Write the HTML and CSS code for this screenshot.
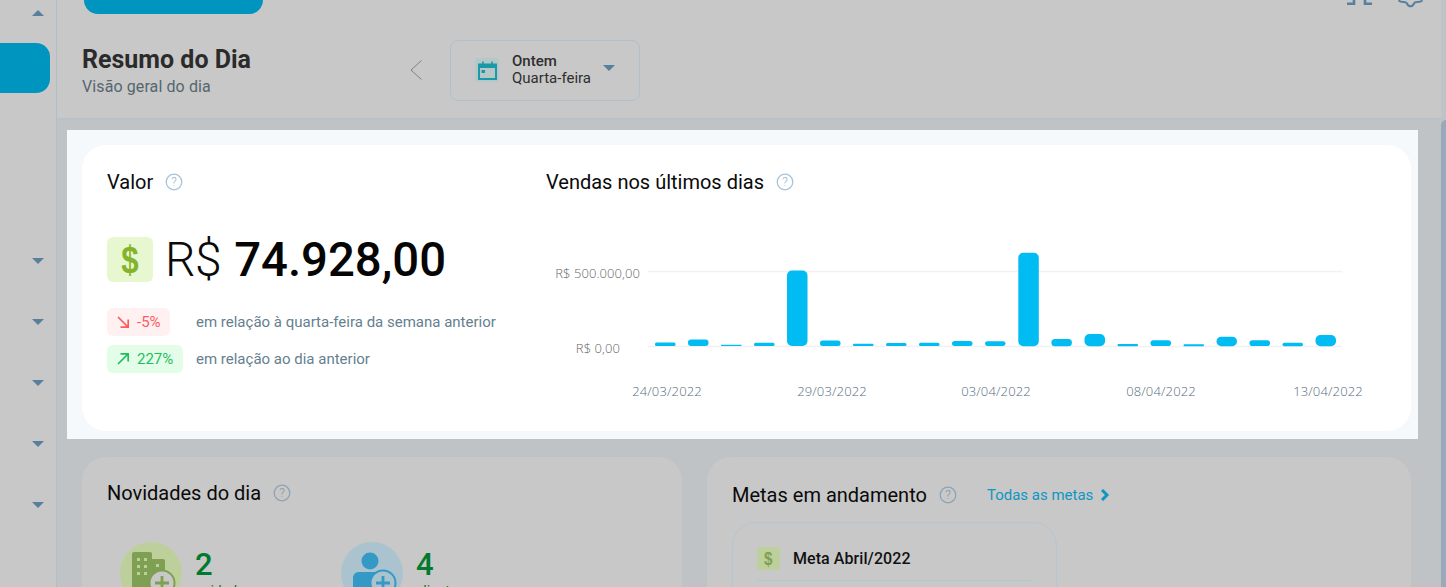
FILE: index.html
```html
<!DOCTYPE html>
<html lang="pt-BR">
<head>
<meta charset="utf-8">
<title>Resumo do Dia</title>
<link rel="stylesheet" href="styles.css">
</head>
<body>
<div class="app">
  <aside class="sidebar">
    <span class="tri tri-up"></span>
    <div class="side-active"></div>
    <div class="side-list">
      <span class="tri"></span>
      <span class="tri"></span>
      <span class="tri"></span>
      <span class="tri"></span>
      <span class="tri"></span>
    </div>
  </aside>
  <main class="main">
    <div class="top-zone">
      <div class="topbar">
        <div class="top-button"></div>
        <div class="top-icons">
          <svg width="25" height="6" viewBox="0 0 25 6"><path d="M0 3.700h7V0M25 3.700h-7V0" fill="none" stroke="#587f9c" stroke-width="2.600"/></svg>
          <svg width="25" height="8" viewBox="0 0 25 8"><path d="M0.500 0.300c1 1.500 3 1.700 5 1.700 2 0 3 0.200 3.500 1.500C9.800 5.300 11 6.300 12.500 6.300s2.700-1 3.500-2.800C16.500 2.200 17.500 2 19.500 2c2 0 4-0.200 5-1.700" fill="none" stroke="#587f9c" stroke-width="2"/></svg>
        </div>
      </div>
      <header class="page-head">
        <div class="titles">
          <h1>Resumo do Dia</h1>
          <p>Visão geral do dia</p>
        </div>
        <svg class="chev" width="14" height="22" viewBox="0 0 14 22"><path d="M12.500 1.500 2 11l10.500 9.500" fill="none" stroke="#76848e" stroke-width="1"/></svg>
        <div class="date-pick">
          <span class="cal-box">
            <svg width="19" height="19" viewBox="0 0 19 19"><path d="M1 3.500h17v14.500H1z" fill="none" stroke="#1a9aa8" stroke-width="2"/><path d="M1 3h17v4H1z" fill="#1a9aa8"/><path d="M5 0.500v3M14 0.500v3" stroke="#1a9aa8" stroke-width="1.600"/><rect x="3.500" y="9" width="3.500" height="3" fill="#1a9aa8"/></svg>
          </span>
          <span class="date-text"><b>Ontem</b><span>Quarta-feira</span></span>
          <span class="tri tri-date"></span>
        </div>
      </header>
    </div>

    <div class="content">
      <section class="spot">
        <div class="card hero">
          <div class="hero-left">
            <h2 class="card-title">Valor <svg class="help" viewBox="0 0 18 18"><circle cx="9" cy="9" r="7.800" fill="none" stroke="#a9c4da" stroke-width="1.300"/><text x="9" y="13" text-anchor="middle" class="help-q">?</text></svg></h2>
            <div class="amount">
              <span class="dollar"><i>$</i></span>
              <span class="rs">R$</span>
              <strong>74.928,00</strong>
            </div>
            <div class="cmp">
              <span class="pill pill-down">
                <svg width="12" height="12" viewBox="0 0 12 12"><path d="M1 1l9.500 9.500M11.200 3.500v7.700H3.500" fill="none" stroke="#fc5b5b" stroke-width="1.700"/></svg>
                -5%
              </span>
              <span class="cmp-text">em relação à quarta-feira da semana anterior</span>
            </div>
            <div class="cmp cmp-2">
              <span class="pill pill-up">
                <svg width="12" height="12" viewBox="0 0 12 12"><path d="M1 11l9.500-9.500M3.500 0.800h7.700v7.700" fill="none" stroke="#1fbf5f" stroke-width="1.700"/></svg>
                227%
              </span>
              <span class="cmp-text">em relação ao dia anterior</span>
            </div>
          </div>
          <div class="hero-right">
            <h2 class="card-title">Vendas nos últimos dias <svg class="help" viewBox="0 0 18 18"><circle cx="9" cy="9" r="7.800" fill="none" stroke="#a9c4da" stroke-width="1.300"/><text x="9" y="13" text-anchor="middle" class="help-q">?</text></svg></h2>
            <svg class="chart" width="840" height="210" viewBox="530 200 840 210">
              <path class="grid" d="M648 271.500H1342M648 346.500H1342"/>
              <text class="y-lbl" x="640" y="278" text-anchor="end">R$ 500.000,00</text>
              <text class="y-lbl" x="620" y="353" text-anchor="end">R$ 0,00</text>
              <g class="bars">
                <rect x="655" y="342.500" width="20.500" height="3.500" rx="1.500"/>
                <rect x="688" y="339.500" width="20.500" height="6.500" rx="3"/>
                <rect x="721" y="344.800" width="20.500" height="1.200" rx="0.500"/>
                <rect x="754" y="342.800" width="20.500" height="3.200" rx="1.500"/>
                <rect x="787" y="270.500" width="20.500" height="75.500" rx="5"/>
                <rect x="820" y="340.500" width="20.500" height="5.500" rx="2.500"/>
                <rect x="853" y="343.800" width="20.500" height="2.200" rx="1"/>
                <rect x="886" y="343" width="20.500" height="3" rx="1.500"/>
                <rect x="919" y="342.800" width="20.500" height="3.200" rx="1.500"/>
                <rect x="952" y="341" width="20.500" height="5" rx="2.500"/>
                <rect x="985" y="341.200" width="20.500" height="4.800" rx="2.400"/>
                <rect x="1018.300" y="252.800" width="20.500" height="93.500" rx="5"/>
                <rect x="1051.400" y="339" width="20.500" height="7.200" rx="3.500"/>
                <rect x="1084.500" y="334" width="20.500" height="12.200" rx="5"/>
                <rect x="1117.500" y="344" width="20.500" height="2.200" rx="1"/>
                <rect x="1150.500" y="340.300" width="20.500" height="5.800" rx="2.800"/>
                <rect x="1183.500" y="344.300" width="20.500" height="1.900" rx="0.900"/>
                <rect x="1216.500" y="336.700" width="20.500" height="9.500" rx="4.700"/>
                <rect x="1249.500" y="340.300" width="20.500" height="5.800" rx="2.800"/>
                <rect x="1282.500" y="342.700" width="20.500" height="3.500" rx="1.700"/>
                <rect x="1315.500" y="335" width="20.500" height="11.200" rx="5"/>
              </g>
              <text class="x-lbl" x="667" y="396" text-anchor="middle">24/03/2022</text>
              <text class="x-lbl" x="832" y="396" text-anchor="middle">29/03/2022</text>
              <text class="x-lbl" x="996" y="396" text-anchor="middle">03/04/2022</text>
              <text class="x-lbl" x="1161" y="396" text-anchor="middle">08/04/2022</text>
              <text class="x-lbl" x="1328" y="396" text-anchor="middle">13/04/2022</text>
            </svg>
          </div>
        </div>
      </section>

      <section class="lower">
        <div class="card news">
          <h2 class="card-title">Novidades do dia <svg class="help" viewBox="0 0 18 18"><circle cx="9" cy="9" r="7.800" fill="none" stroke="#8ea3b4" stroke-width="1.300"/><text x="9" y="13" text-anchor="middle" class="help-q dim">?</text></svg></h2>
          <div class="stats">
            <div class="stat">
              <span class="circle c-green">
                <svg width="62" height="62" viewBox="0 0 62 62"><path d="M14 10h16a2 2 0 0 1 2 2v5h11a2 2 0 0 1 2 2v31H12V12a2 2 0 0 1 2-2z" fill="#7f9f52"/><path d="M17 16h3v3h-3zM24 16h3v3h-3zM17 23h3v3h-3zM24 23h3v3h-3zM17 30h3v3h-3zM24 30h3v3h-3zM36 22h3v3h-3z" fill="#bdd09c"/><circle cx="42" cy="41" r="12.500" fill="#c8c8c8" stroke="#7f9f52" stroke-width="2"/><path d="M42 34v14M35 41h14" stroke="#7f9f52" stroke-width="2.800"/></svg>
              </span>
              <div class="stat-num"><b>2</b><span>unidades</span></div>
            </div>
            <div class="stat">
              <span class="circle c-blue">
                <svg width="62" height="62" viewBox="0 0 62 62"><circle cx="29" cy="19" r="8.500" fill="#3499c4"/><path d="M12 50V36c0-4 3-6 6-6h20c3 0 6 2 6 5v15z" fill="#3499c4"/><circle cx="42" cy="41" r="12.500" fill="#abc3ce" stroke="#3499c4" stroke-width="2"/><path d="M42 34v14M35 41h14" stroke="#3499c4" stroke-width="2.800"/></svg>
              </span>
              <div class="stat-num"><b>4</b><span>clientes</span></div>
            </div>
          </div>
        </div>
        <div class="card goals">
          <div class="goals-head">
            <h2 class="card-title">Metas em andamento <svg class="help" viewBox="0 0 18 18"><circle cx="9" cy="9" r="7.800" fill="none" stroke="#8ea3b4" stroke-width="1.300"/><text x="9" y="13" text-anchor="middle" class="help-q dim">?</text></svg></h2>
            <a class="all-link">Todas as metas
              <svg width="10" height="12" viewBox="0 0 10 12"><path d="M2 1l5 5-5 5" fill="none" stroke="#0f96c2" stroke-width="3"/></svg>
            </a>
          </div>
          <div class="goal-card">
            <div class="goal-row">
              <span class="dollar dollar-sm"><i>$</i></span>
              <span class="goal-name">Meta Abril/2022</span>
            </div>
            <div class="goal-rule"></div>
          </div>
        </div>
      </section>
    </div>
  </main>
  <div class="scrollbar"><div class="thumb"></div></div>
</div>
</body>
</html>
```

FILE: styles.css
```css
* { box-sizing: border-box; }
html, body { margin: 0; height: 587px; overflow: hidden; }
body { font-family: Roboto, "Liberation Sans", sans-serif; background: #c8c8c8; }
h1, h2, p { margin: 0; }

.app { display: flex; height: 587px; overflow: hidden; }

.sidebar {
  width: 57px; flex: none; height: 587px;
  border-right: 1px solid #b1bec9;
  background: #c8c8c8;
  display: flex; flex-direction: column;
}
.tri {
  display: block; width: 0; height: 0;
  border-left: 6.500px solid transparent; border-right: 6.500px solid transparent;
  border-top: 6px solid #587f9c;
}
.tri-up { border-top: 0; border-bottom: 6px solid #587f9c; margin: 10px 0 0 32px; }
.side-active {
  width: 50px; height: 50px; margin-top: 27px;
  background: #0095bf; border-radius: 0 14px 14px 0;
}
.side-list { display: flex; flex-direction: column; gap: 55px; margin: 165px 0 0 32px; }

.main { width: 1384px; flex: none; display: flex; flex-direction: column; }
.top-zone { height: 120px; flex: none; background: #c8c8c8; border-bottom: 2px solid #bac1c7; }
.topbar { height: 14px; display: flex; justify-content: space-between; padding: 0 18px 0 27px; }
.top-button { width: 179px; height: 14px; background: #0095bf; border-radius: 0 0 20px 20px; }
.top-icons { display: flex; gap: 26px; }

.page-head { display: flex; align-items: center; height: 76px; margin-top: 18px; padding-left: 25px; }
.titles { width: 327px; flex: none; padding-top: 1px; }
h1 { font-size: 25px; line-height: 32px; font-weight: 700; color: #2b2b2b; }
.titles p { font-size: 16px; line-height: 22px; color: #55666f; letter-spacing: 0.1px; }
.chev { margin-right: 27px; flex: none; }
.date-pick {
  width: 190px; height: 61px; flex: none;
  border: 1px solid #b2c0cc; border-radius: 8px;
  display: flex; align-items: center; padding-left: 24px;
}
.cal-box { width: 24px; height: 24px; background: #b6c7c8; border-radius: 3px; display: flex; align-items: center; justify-content: center; }
.date-text { display: flex; flex-direction: column; margin-left: 13px; font-size: 15px; line-height: 17px; color: #2e2e2e; }
.date-text b { font-weight: 500; }
.tri-date { margin-left: 12px; margin-top: -4px; }

.content { flex: 1; background: #bfc3c5; padding: 10px 0 0 10px; display: flex; flex-direction: column; }
.spot { width: 1351px; height: 309px; background: #f5f9fc; padding: 15px 7px 8px 15px; flex: none; }
.card { background: #fff; border-radius: 24px; }
.hero { height: 286px; display: flex; padding: 25px; }
.hero-left { width: 439px; flex: none; }
.hero-right { flex: 1; position: relative; }
.card-title { font-size: 20px; line-height: 24px; font-weight: 400; color: #0a0a0a; display: flex; align-items: center; gap: 12px; }
.help { width: 18px; height: 18px; flex: none; }
.help-q { font: 300 12px Roboto, sans-serif; fill: #8fb2cf; }
.help-q.dim { fill: #7f95a6; }

.amount { display: flex; align-items: center; margin-top: 43px; height: 45px; }
.dollar {
  width: 46px; height: 45px; border-radius: 6px; background: #e7f8d0;
  color: #84b32c; font-weight: 700; font-size: 39px; font-family: "Liberation Sans", sans-serif;
  display: flex; align-items: center; justify-content: center; flex: none;
}
.dollar i { font-style: normal; display: block; transform: scaleX(0.8); }
.rs { font-size: 48px; font-weight: 300; color: #0a0a0a; margin-left: 12px; letter-spacing: -0.5px; }
.amount strong { font-size: 47.300px; font-weight: 500; color: #050505; margin-left: 13px; }

.cmp { display: flex; align-items: center; margin-top: 26px; height: 28px; font-size: 15px; }
.cmp-2 { margin-top: 9px; }
.pill { display: flex; align-items: center; gap: 8px; height: 28px; border-radius: 6px; padding-left: 10px; flex: none; font-size: 15px; }
.pill-down { width: 63px; background: #fff1f1; color: #fc5b5b; }
.pill-up { width: 76px; background: #e3fde9; color: #1fbf5f; }
.cmp-text { color: #657f90; margin-left: 26px; }
.cmp-2 .cmp-text { margin-left: 13px; }

.chart { position: absolute; left: -16px; top: 30px; display: block; }
.grid { stroke: #f1f1f1; stroke-width: 1.500; fill: none; }
.bars rect { fill: #00bcf2; }
.y-lbl { font: 300 13px "Open Sans", sans-serif; fill: #666; letter-spacing: 0.08px; }
.x-lbl { font: 300 13px "Open Sans", sans-serif; fill: #566c7b; letter-spacing: 0.15px; }

.lower { display: flex; gap: 25px; margin: 18px 0 0 15px; }
.lower .card { background: #c8c8c8; height: 200px; padding: 24px 25px; }
.news { width: 600px; flex: none; }
.goals { width: 704px; flex: none; }
.stats { display: flex; margin: 37px 0 0 13px; }
.stat { display: flex; width: 221px; }
.circle { width: 62px; height: 62px; border-radius: 50%; flex: none; }
.c-green { background: #bdd09c; }
.c-blue { background: #abc3ce; }
.stat-num { margin-left: 13px; display: flex; flex-direction: column; }
.stat-num b { font-size: 31px; line-height: 34px; font-weight: 500; color: #007a2e; margin-top: 6px; }
.stat-num span { font-size: 14px; line-height: 18px; color: #007a2e; }
.goals-head { display: flex; align-items: center; gap: 30px; margin-top: 2px; }
.all-link { font-size: 15px; color: #0f96c2; display: flex; align-items: center; gap: 7px; }
.goal-card { width: 325px; height: 150px; margin-top: 15px; border: 1px solid #b5c5d2; border-radius: 24px; padding: 24px; }
.goal-row { display: flex; align-items: center; gap: 13px; }
.dollar-sm { width: 23px; height: 23px; border-radius: 3px; background: #bdd09c; color: #7f9f52; font-size: 19px; }
.goal-name { font-size: 16px; font-weight: 500; color: #111; letter-spacing: 0.07px; }
.goal-rule { height: 1px; background: #b5c5d2; margin-top: 10px; }

.scrollbar { width: 5px; flex: none; background: #bfc3c5; padding-top: 120px; height: 587px; }
.thumb { height: 467px; background: #9aa9ba; border-radius: 5px 0 0 0; }
```
